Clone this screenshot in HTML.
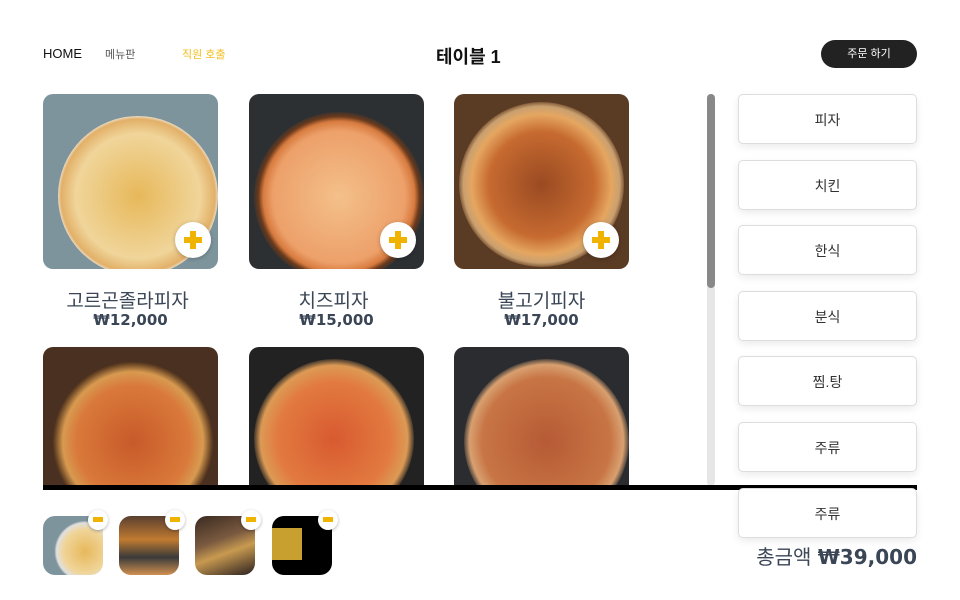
<!DOCTYPE html>
<html><head><meta charset="utf-8"><style>
*{margin:0;padding:0;box-sizing:border-box}
body{width:960px;height:600px;background:#fff;position:relative;overflow:hidden;font-family:"Liberation Sans","Noto Sans CJK KR",sans-serif;color:#333}
.a{position:absolute}
.img{position:absolute;width:175px;height:175px;border-radius:10px;overflow:hidden}
.pz{position:absolute;border-radius:50%}
.plus{position:absolute;width:36px;height:36px;border-radius:50%;background:#fff;box-shadow:0 1px 4px rgba(0,0,0,.25)}
.plus:before{content:"";position:absolute;left:9px;top:15px;width:18px;height:6px;background:#f0b400}
.plus:after{content:"";position:absolute;left:15px;top:9px;width:6px;height:18px;background:#f0b400}
.name{position:absolute;width:175px;text-align:center;font-size:19px;color:#3a4556;font-family:"DejaVu Sans","Noto Sans CJK KR",sans-serif}
.price{position:absolute;width:175px;text-align:center;font-size:15px;font-weight:bold;color:#3a4556;font-family:"DejaVu Sans","Noto Sans CJK KR",sans-serif}
.cat{position:absolute;left:738px;width:179px;height:50px;border:1px solid #ddd;border-radius:5px;background:#fff;box-shadow:0 3px 8px rgba(0,0,0,.08);text-align:center;line-height:50px;font-size:14px;color:#333}
.th{position:absolute;top:516px;width:60px;height:59px;border-radius:12px;overflow:hidden}
.mn{position:absolute;top:510px;width:20px;height:20px;border-radius:50%;background:#fff;box-shadow:0 1px 3px rgba(0,0,0,.3)}
.mn:after{content:"";position:absolute;left:5px;top:7px;width:10px;height:5px;background:#f0b400}
</style></head><body>
<div class="a" style="left:43px;top:46px;font-size:13px;color:#111">HOME</div>
<div class="a" style="left:105px;top:46px;font-size:11px;color:#555">메뉴판</div>
<div class="a" style="left:182px;top:46px;font-size:11px;color:#f0c020">직원 호출</div>
<div class="a" style="left:436px;top:43px;font-size:18px;font-weight:bold;color:#111">테이블 1</div>
<div class="a" style="left:821px;top:40px;width:96px;height:28px;border-radius:14px;background:#222;color:#fff;font-size:11px;text-align:center;line-height:28px">주문 하기</div>

<div class="img" style="left:43px;top:94px;background:#7e949c"><div class="pz" style="left:15px;top:22px;width:160px;height:160px;background:radial-gradient(circle,#e7b85a 0,#f0d59a 55%,#e2b068 68%,#eee 72%,#dcdcdc 78%,#7e949c 80%)"></div></div>
<div class="img" style="left:249px;top:94px;background:#2d3033"><div class="pz" style="left:5px;top:18px;width:170px;height:170px;background:radial-gradient(circle,#f4c08a 0,#eda06a 55%,#d77b3f 63%,#6b3a1c 67%,#2d3033 72%)"></div></div>
<div class="img" style="left:454px;top:94px;background:#5a3b24"><div class="pz" style="left:5px;top:8px;width:165px;height:165px;background:radial-gradient(circle,#9a4a22 0,#c66a30 45%,#e5a660 60%,#c9a070 67%,#6a4326 72%)"></div></div>
<div class="plus" style="left:175px;top:222px"></div>
<div class="plus" style="left:380px;top:222px"></div>
<div class="plus" style="left:583px;top:222px"></div>
<div class="name" style="left:40px;top:286px">고르곤졸라피자</div>
<div class="name" style="left:246px;top:286px">치즈피자</div>
<div class="name" style="left:454px;top:286px">불고기피자</div>
<div class="price" style="left:43px;top:311px">₩12,000</div>
<div class="price" style="left:249px;top:311px">₩15,000</div>
<div class="price" style="left:454px;top:311px">₩17,000</div>

<div class="img" style="left:43px;top:347px;height:140px;border-radius:10px 10px 0 0;background:#4a3020"><div class="pz" style="left:10px;top:15px;width:160px;height:160px;background:radial-gradient(circle,#c85a2a 0,#d9793a 50%,#d89a50 62%,#5a3a20 70%)"></div></div>
<div class="img" style="left:249px;top:347px;height:140px;border-radius:10px 10px 0 0;background:#222"><div class="pz" style="left:5px;top:12px;width:160px;height:160px;background:radial-gradient(circle,#d85a30 0,#e27a40 50%,#dc9a55 65%,#222 72%)"></div></div>
<div class="img" style="left:454px;top:347px;height:140px;border-radius:10px 10px 0 0;background:#2a2c30"><div class="pz" style="left:10px;top:12px;width:165px;height:165px;background:radial-gradient(circle,#b65a35 0,#c87545 55%,#d8a070 66%,#2a2c30 72%)"></div></div>

<div class="a" style="left:707px;top:94px;width:8px;height:392px;background:#e6e6e6;border-radius:4px"></div>
<div class="a" style="left:707px;top:94px;width:8px;height:194px;background:#888;border-radius:4px"></div>
<div class="a" style="left:43px;top:485px;width:874px;height:5px;background:#000"></div>

<div class="cat" style="top:94px">피자</div>
<div class="cat" style="top:160px">치킨</div>
<div class="cat" style="top:225px">한식</div>
<div class="cat" style="top:291px">분식</div>
<div class="cat" style="top:356px">찜.탕</div>
<div class="cat" style="top:422px">주류</div>
<div class="cat" style="top:488px">주류</div>

<div class="th" style="left:43px;background:radial-gradient(circle at 70% 60%,#e7b85a 0,#f0d59a 40%,#e0e0e0 52%,#7e949c 56%)"></div>
<div class="th" style="left:119px;background:linear-gradient(#5a4030,#c07a30 40%,#3a3a3a 70%,#d09050)"></div>
<div class="th" style="left:195px;background:linear-gradient(160deg,#3a2a20,#7a5a40 40%,#c89a50 60%,#2a2020)"></div>
<div class="th" style="left:272px;background:#000"><div style="position:absolute;left:0;top:12px;width:30px;height:32px;background:#c8a030"></div></div>
<div class="mn" style="left:88px"></div>
<div class="mn" style="left:165px"></div>
<div class="mn" style="left:241px"></div>
<div class="mn" style="left:318px"></div>

<div class="a" style="right:43px;top:541px;font-size:20px;color:#3a4556;font-family:'DejaVu Sans','Noto Sans CJK KR',sans-serif">총금액 <b>₩39,000</b></div>
</body></html>
